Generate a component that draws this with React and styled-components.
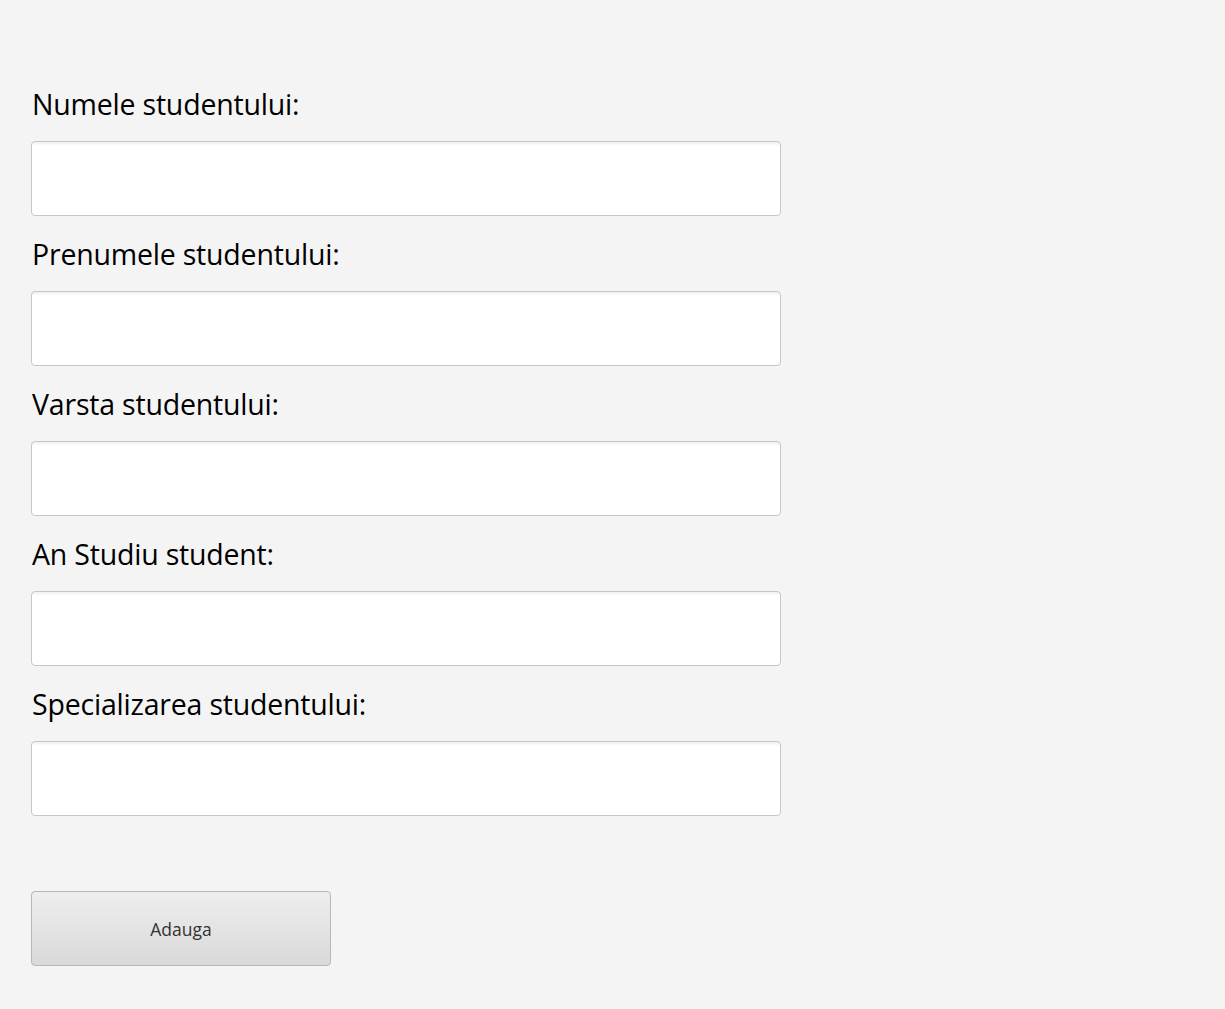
import React, { useState } from 'react'
import styled, { createGlobalStyle } from 'styled-components'

const GlobalStyle = createGlobalStyle`
    html, body {
        margin: 0;
        padding: 0;
        background: #f4f4f4;
        font-family: "Open Sans", "Noto Sans", sans-serif;
    }
`

const Page = styled.div`
    min-height: 1009px;
    padding: 66px 0 0 31px;
    box-sizing: border-box;
`

const Form = styled.form`
    display: flex;
    flex-direction: column;
    width: 750px;
`

const Label = styled.label`
    height: 75px;
    display: flex;
    align-items: center;
    padding-left: 1px;
    font-size: 28.5px;
    color: #000;
    letter-spacing: -0.2px;
`

const Input = styled.input`
    height: 75px;
    width: 750px;
    box-sizing: border-box;
    border: 1px solid #c6c6c6;
    border-radius: 4px;
    background: linear-gradient(#f0f0f0 0, #ffffff 4px, #ffffff 100%);
    outline: none;
    padding: 0 10px;
    font-size: 20px;
    font-family: inherit;
`

const Spacer = styled.div`
    height: 75px;
`

const Button = styled.button`
    width: 300px;
    height: 75px;
    border: 1px solid #b8b8b8;
    border-radius: 4px;
    background: linear-gradient(#eeeeee, #d9d9d9);
    color: #333;
    font-family: inherit;
    font-size: 17.5px;
    padding-top: 2px;
    cursor: pointer;
`

const fields = [
    { name: 'nume', label: 'Numele studentului:' },
    { name: 'prenume', label: 'Prenumele studentului:' },
    { name: 'varsta', label: 'Varsta studentului:' },
    { name: 'an', label: 'An Studiu student:' },
    { name: 'specializare', label: 'Specializarea studentului:' },
]

function App() {
    const [student, setStudent] = useState({
        nume: '',
        prenume: '',
        varsta: '',
        an: '',
        specializare: ''
    })

    const handleChange = (event) => {
        const { name, value } = event.target
        setStudent({ ...student, [name]: value })
    }

    const handleSubmit = (event) => {
        event.preventDefault()
    }

    return (
        <Page>
            <GlobalStyle />
            <Form onSubmit={handleSubmit}>
                {fields.map(f => (
                    <React.Fragment key={f.name}>
                        <Label htmlFor={f.name}>{f.label}</Label>
                        <Input
                            id={f.name}
                            name={f.name}
                            value={student[f.name]}
                            onChange={handleChange}
                        />
                    </React.Fragment>
                ))}
                <Spacer />
                <Button type='submit'>Adauga</Button>
            </Form>
        </Page>
    )
}

export default App
